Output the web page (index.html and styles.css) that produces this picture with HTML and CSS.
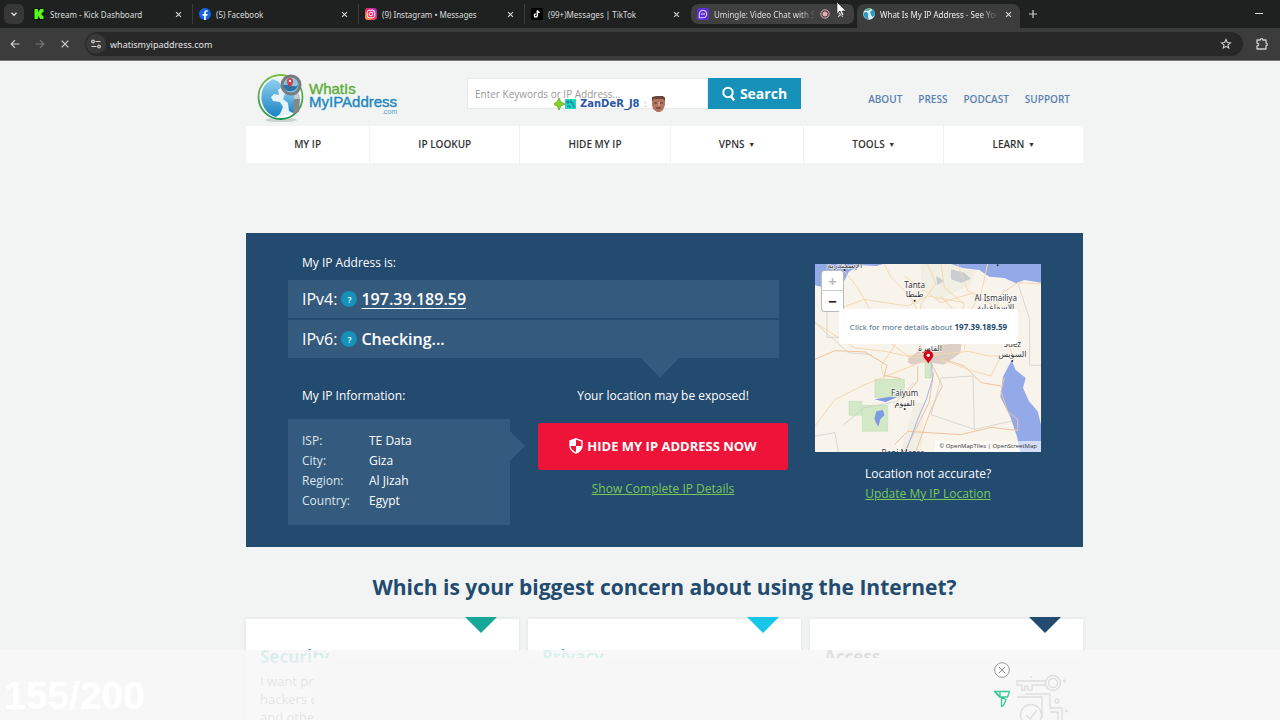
FILE: index.html
```html
<!DOCTYPE html>
<html lang="en">
<head>
    <meta charset="UTF-8">
    <meta name="viewport" content="width=device-width, initial-scale=1.0">
    <title>What Is My IP Address</title>
    <link rel="stylesheet" href="styles.css">
</head>
<body>
    <div class="browser">
        <div class="tab-strip">
            <button class="tab-search" aria-label="Search tabs">
                <svg width="8" height="8" viewBox="0 0 8 8"><path d="M1.5 2.8 4 5.2 6.5 2.8" fill="none" stroke="#ddd" stroke-width="1.4"/></svg>
            </button>
            <div class="tab">
                <svg class="favicon" viewBox="0 0 12 12"><rect width="12" height="12" fill="#0a1a06"/><path d="M1.5 1h3.4v2.5h1V2.3h1.2V1h3.4v3.2H9.3v1.2H8.2v1.2h1.1v1.2h1.2V11H7.1V9.7H5.9V8.5h-1V11H1.5z" fill="#53fc18"/></svg>
                <span class="tab-title">Stream - Kick Dashboard</span>
                <button class="tab-close" aria-label="Close"></button>
            </div>
            <div class="tab">
                <svg class="favicon" viewBox="0 0 12 12"><circle cx="6" cy="6" r="6" fill="#1463e8"/><path d="M5.1 12V7.8H3.6V6h1.5V4.8c0-1.7.9-2.6 2.4-2.6.5 0 .9.1 1.1.1v1.5h-.8c-.8 0-1 .5-1 1.1V6h1.8l-.3 1.8H6.8V12z" fill="#fff"/></svg>
                <span class="tab-title">(5) Facebook</span>
                <button class="tab-close" aria-label="Close"></button>
            </div>
            <div class="tab">
                <svg class="favicon" viewBox="0 0 12 12">
                    <defs><linearGradient id="insta" x1="0" y1="1" x2="1" y2="0"><stop offset="0" stop-color="#ffc13b"/><stop offset=".45" stop-color="#f5285d"/><stop offset="1" stop-color="#9b2ee0"/></linearGradient></defs>
                    <rect width="12" height="12" rx="3" fill="url(#insta)"/>
                    <rect x="2.2" y="2.2" width="7.6" height="7.6" rx="2.2" fill="none" stroke="#fff"/><circle cx="6" cy="6" r="1.8" fill="none" stroke="#fff"/><circle cx="8.2" cy="3.8" r=".5" fill="#fff"/>
                </svg>
                <span class="tab-title">(9) Instagram • Messages</span>
                <button class="tab-close" aria-label="Close"></button>
            </div>
            <div class="tab tab-quiet">
                <svg class="favicon" viewBox="0 0 12 12"><rect width="12" height="12" fill="#000"/><path d="M6.3 2.2v5.3a1.5 1.5 0 1 1-1.5-1.5M6.3 2.5c.3 1.3 1.1 1.8 2.4 1.9" fill="none" stroke="#fff" stroke-width="1.4"/></svg>
                <span class="tab-title">(99+)Messages | TikTok</span>
                <button class="tab-close" aria-label="Close"></button>
            </div>
            <div class="tab tab-hover tab-quiet">
                <svg class="favicon" viewBox="0 0 12 12"><rect width="12" height="12" rx="2" fill="#5b2fd6"/><path d="M2.3 9.7V6A3.7 3.7 0 1 1 6 9.7z" fill="none" stroke="#d9ccff" stroke-width="1.1"/><path d="M4.2 6h3.6" stroke="#d9ccff" stroke-width="1.3" stroke-dasharray="1 .3"/></svg>
                <span class="tab-title fade">Umingle: Video Chat with Strangers</span>
                <svg class="recording" viewBox="0 0 10 10"><circle cx="5" cy="5" r="4.2" fill="none" stroke="#e2aeb4"/><circle cx="5" cy="5" r="2.5" fill="#e2aeb4"/></svg>
                <button class="tab-close" aria-label="Close"></button>
            </div>
            <div class="tab tab-active tab-quiet">
                <svg class="favicon" viewBox="0 0 12 12"><circle cx="6" cy="6" r="5.8" fill="#dff1f6"/><path d="M.8 4.5 3.5 4l2 2-.6 2.5 1 3C2.5 11.500.2 8.500.8 4.500zM7 4l3-2.500C11.500 3 12 5 11.700 7L9.500 9 8 7z" fill="#2a9cc4"/><path d="M2 2.500A5.800 5.800 0 0 1 8 .6L5 3z" fill="#3fae8d"/></svg>
                <span class="tab-title fade">What Is My IP Address - See Your Public</span>
                <button class="tab-close" aria-label="Close"></button>
            </div>
            <button class="new-tab" aria-label="New tab">
                <svg width="8" height="8" viewBox="0 0 8 8"><path d="M4 0v8M0 4h8" stroke="#ccc" stroke-width="1.2"/></svg>
            </button>
            <button class="minimize" aria-label="Minimize"></button>
        </div>
        <div class="toolbar">
            <button class="tool" aria-label="Back"><svg viewBox="0 0 10 10"><path d="M9.5 5H1.500M5 1.200 1.200 5 5 8.800" fill="none" stroke="#d0d0d0" stroke-width="1.2"/></svg></button>
            <button class="tool" aria-label="Forward"><svg viewBox="0 0 10 10"><path d="M.5 5h8M5 1.200 8.800 5 5 8.800" fill="none" stroke="#777" stroke-width="1.2"/></svg></button>
            <button class="tool" aria-label="Stop"><svg viewBox="0 0 10 10"><path d="m1.7 1.7 6.6 6.6m0-6.600L1.700 8.300" stroke="#d0d0d0" stroke-width="1.2"/></svg></button>
            <div class="address-bar">
                <span class="site-info"><svg width="10" height="10" viewBox="0 0 10 10"><g fill="none" stroke="#d0d0d0" stroke-width="1.2"><circle cx="2" cy="2.5" r="1.3"/><path d="M4.5 2.500h5M.5 7.500h5"/><circle cx="8" cy="7.5" r="1.3"/></g></svg></span>
                <input class="url" type="text" value="whatismyipaddress.com" aria-label="Address">
                <svg class="star" width="12" height="12" viewBox="0 0 12 12"><path d="m6 1.5 1.3 3 3.200.3L8 6.900l.8 3.200L6 8.400l-2.800 1.700L4 6.900 1.500 4.800l3.200-.3z" fill="none" stroke="#d0d0d0" stroke-width="1.1"/></svg>
            </div>
            <button class="extensions" aria-label="Extensions"><svg width="14" height="14" viewBox="0 0 14 14"><path d="M2 3h3.300a1.300 1.300 0 0 1 2.600 0H11v3.100a1.300 1.300 0 0 1 0 2.600V12H2V9c2.200-.2 2.200-2.800 0-3z" fill="none" stroke="#d0d0d0" stroke-width="1.3" stroke-linejoin="round"/></svg></button>
        </div>
    </div>

    <div class="page">
        <header class="site-header">
            <a class="logo" href="#">
                <svg class="logo-globe" viewBox="0 0 50 50">
                    <defs>
                        <linearGradient id="sea" x1="0" y1="0" x2="0" y2="1"><stop offset="0" stop-color="#8ed1ed"/><stop offset="1" stop-color="#1b83c5"/></linearGradient>
                        <linearGradient id="ring" x1="0" y1="0" x2="0" y2="1"><stop offset="0" stop-color="#77c043"/><stop offset="1" stop-color="#23974a"/></linearGradient>
                    </defs>
                    <ellipse cx="24" cy="47" rx="16" ry="2" fill="#cbd0d0"/>
                    <circle cx="23.5" cy="24" r="22" fill="#fff" stroke="url(#ring)" stroke-width="1.8"/>
                    <circle cx="23.5" cy="24" r="19.5" fill="#e6f3f9"/>
                    <path d="M5 19c1-6 6-11 11-13l6 3 3 5-4 3 1 5-5-1-3 3 2 4 7 1 3 5-3 7-4 3C11 42 2 32 5 19z" fill="url(#sea)"/>
                    <path d="m28 20 6-3 8 4c2 8-1 15-6 19l-4-2-1-8-5-4z" fill="url(#sea)"/>
                    <path d="M37 26h6l-1 13-6 2z" fill="#85898c"/><path d="M37 21h5v5h-5z" fill="#c5c8ca"/>
                    <circle cx="34" cy="12" r="9" fill="#8bc4e2" stroke="#777b80" stroke-width="3"/>
                    <path d="M26 13c4-4 12 3 15-1-1 7-12 9-15 1z" fill="#2d72a6"/>
                    <path d="M33 14c-5-5-3-9 0-9s5 4 0 9z" fill="#d9383a"/><circle cx="33" cy="8" r="1.2" fill="#fff"/>
                </svg>
                <span class="logo-text">
                    <span class="logo-top">WhatIs</span>
                    <span class="logo-main">MyIPAddress</span>
                    <span class="logo-com">.com</span>
                </span>
            </a>
            <form class="search">
                <input type="text" placeholder="Enter Keywords or IP Address..." aria-label="Search">
                <button type="button">
                    <svg width="14" height="16" viewBox="0 0 14 16"><circle cx="6" cy="6.5" r="4.7" fill="none" stroke="#fff" stroke-width="2"/><path d="m8.8 10 3.400 4.500" stroke="#fff" stroke-width="2.4"/></svg>
                    Search
                </button>
                <div class="viewer-badge">
                    <svg width="22" height="12" viewBox="0 0 22 12"><path d="m5 0 2 4 4 2-4 2-2 4-2-4-4-2 4-2z" fill="#86cf24" stroke="#4f9414" stroke-width=".6"/><rect x="11" y="1" width="11" height="10" fill="#25d3c9"/><path d="M13 3h2v2h-2zM17 2v3h3M13 8h3v2M18 7h2v3" fill="none" stroke="#087c86"/></svg>
                    <span>ZanDeR_J8</span>
                    <i>:</i>
                    <svg width="15" height="16" viewBox="0 0 15 16"><path d="M1 1h13v8l-2 5-3 2H6l-4-3-1-4z" fill="#b47462"/><path d="M1 5V1l4-1h7l2 2v3l-2-2H3z" fill="#6b453a"/><path d="M3 7h3m3 0h3M5 12h5" stroke="#5a3028"/><path d="M7 6h2v4H7z" fill="#cf9a85"/></svg>
                </div>
            </form>
            <nav class="top-links">
                <a href="#">ABOUT</a>
                <a href="#">PRESS</a>
                <a href="#">PODCAST</a>
                <a href="#">SUPPORT</a>
            </nav>
        </header>

        <nav class="main-nav">
            <a href="#">MY IP</a>
            <a href="#">IP LOOKUP</a>
            <a href="#">HIDE MY IP</a>
            <a href="#">VPNS <small>▼</small></a>
            <a href="#">TOOLS <small>▼</small></a>
            <a href="#">LEARN <small>▼</small></a>
        </nav>

        <main>
            <section class="ip-panel">
                <div class="ip-left">
                    <p class="label">My IP Address is:</p>
                    <div class="addresses">
                        <div class="address">IPv4: <button class="help">?</button> <a href="#">197.39.189.59</a></div>
                        <div class="address">IPv6: <button class="help">?</button> <strong>Checking...</strong></div>
                    </div>
                    <div class="ip-bottom">
                        <div class="info">
                            <p class="label">My IP Information:</p>
                            <dl class="info-box">
                                <dt>ISP:</dt><dd>TE Data</dd>
                                <dt>City:</dt><dd>Giza</dd>
                                <dt>Region:</dt><dd>Al Jizah</dd>
                                <dt>Country:</dt><dd>Egypt</dd>
                            </dl>
                        </div>
                        <div class="exposed">
                            <p>Your location may be exposed!</p>
                            <button class="hide-button">
                                <svg width="14" height="16" viewBox="0 0 14 16"><path d="M7 .8 13 3v4.500c0 3.500-2.500 6-6 7.700-3.500-1.700-6-4.200-6-7.700V3z" fill="none" stroke="#fff" stroke-width="1.4"/><path d="M7 1v7H1V3zM7 8h6c-.5 3.200-2.500 5.400-6 7z" fill="#fff"/></svg>
                                HIDE MY IP ADDRESS NOW
                            </button>
                            <a class="green-link" href="#">Show Complete IP Details</a>
                        </div>
                    </div>
                </div>
                <div class="ip-right">
                    <div class="map">
                        <svg class="map-tiles" viewBox="22 24 678 564" preserveAspectRatio="xMidYMid slice">
                            <rect x="22" y="24" width="678" height="564" fill="#f8f4ec"/>
                            <path d="M340 24h170l-20 60-100 50-50-50zM320 440l30 0-10 148h-60z" fill="#f1eee4"/>
                            <g fill="#94a9e8">
                                <path d="M22 24h205l-20 6-50-2-34 20-20 40-40 10-41-10z"/>
                                <path d="M430 24h270v56l-50-8-25 10-35-16-45-4-30-20-50-6z"/>
                                <path d="m612 312 12 30 30 24-8 30 18 40 26 30 10 40v82h-62l-10-46-20-60-30-60 8-60z"/>
                            </g>
                            <path d="M430 40l40 10 20 18-30 12-30-10zM385 60l24 14-20 14z" fill="#c7cdd0"/>
                            <g fill="#a6d99a" fill-opacity=".45" stroke="#a5d3a0"><path d="M202 370h88v54h-88zM124 436h38v42h-38zM164 448h76v78h-76zM352 316h18v50h-18z"/></g>
                            <path d="m200 430 48-8 20 2-34 14zM206 466l20-4 4 16-12 12-6 22-6-10-6-14z" fill="#7d9be0"/>
                            <path d="m302 306 30-20 50 0 20-20 60-4-4 30-50 34-50-8-46 8-12-8z" fill="#dccfc5"/>
                            <g fill="none" stroke="#c9c8c5" stroke-width="2">
                                <path d="M58 24v220h120M22 200l100 90 70 6M108 506l60-50 100-20 50-56M22 540l60-10 10 58M400 366l96-6 4 160M400 366l-30 110 130 44 110-24M666 328V190L630 80M666 328h34"/>
                            </g>
                            <g fill="none" stroke="#f5d8b0" stroke-width="3">
                                <path d="M110 45l40 50 90 160 60 44 60-5M230 24l20 40 60 60 30 60v110M360 24l24 60-44 60-10 100M400 24l10 70 60 50-20 80-70 70M22 200l120 76 90 10 90 20 60-10 100-10 60 14 90-2M270 160l110 10 80-10 90 20M450 24l30 80 70 40 40 90 30 78M540 24l-20 90-50 80-90 90M700 84l-70-4-50 34-30 90M22 510l60-80 80-40 150-60 50-20M580 300l-30 60-70-20-80-30M230 370l-10-40 40-60 50-90M90 160l80-30 130 20 60-30 110 20M400 120l80 90-10 70M290 60l110 80 100-30"/>
                            </g>
                            <g fill="none" stroke="#f1c39e" stroke-width="3">
                                <path d="M330 330v44l-40 50M370 320l20 40 14 30-34 70-46 128M378 350l-14 90-74 148M22 310l60-26 90 4 66 40-8 30 50 10M590 366l-10 40 20 60 30 24v34l-80-10-90 22-160-10-40 40M410 310l60 20 50 50 60 10"/>
                            </g>
                            <path d="m372 320 2 50-18 60-22 50-40 108" fill="none" stroke="#9fb3e8" stroke-width="3"/>
                            <g class="map-label">
                                <text x="111" y="35">الإسكندرية</text>
                                <text x="321" y="95">Tanta</text><text x="321" y="124">طنطا</text>
                                <text x="564" y="134">Al Ismailiya</text><text x="564" y="162">الإسماعيلية</text>
                                <text x="367" y="284">القاهرة</text>
                                <text x="614" y="273">Suez</text><text x="614" y="304">السويس</text>
                                <text x="291" y="420">Faiyum</text><text x="291" y="449">الفيوم</text>
                                <text x="285" y="600">Bani Mazar</text>
                            </g>
                            <g fill="#333"><circle cx="111" cy="42" r="3"/><circle cx="321" cy="134" r="3"/><circle cx="291" cy="459" r="3"/><circle cx="614" cy="315" r="3"/><circle cx="570" cy="28" r="3"/></g>
                            <path d="M362 322c-5-10-14-14-14-24a14 14 0 0 1 28 0c0 10-9 14-14 24z" fill="#dc0017" stroke="#a4000f"/><circle cx="362" cy="298" r="5" fill="#fff"/>
                        </svg>
                        <div class="zoom"><button disabled>+</button><button>−</button></div>
                        <a class="popup" href="#">Click for more details about <b>197.39.189.59</b></a>
                        <div class="attribution">© OpenMapTiles | OpenStreetMap</div>
                    </div>
                    <p>Location not accurate?</p>
                    <a class="green-link" href="#">Update My IP Location</a>
                </div>
            </section>

            <h2>Which is your biggest concern about using the Internet?</h2>
            <section class="cards">
                <article class="card security">
                    <h3>Security</h3>
                    <p>I want pr<br>hackers c<br>and othe</p>
                </article>
                <article class="card privacy"><h3>Privacy</h3></article>
                <article class="card access"><h3>Access</h3></article>
            </section>
        </main>
    </div>

    <div class="ad-bar">
        <div class="counter">155/200</div>
        <div class="ad-controls">
            <button aria-label="Close ad"><svg width="18" height="18" viewBox="0 0 18 18"><circle cx="9" cy="9" r="7.3" fill="#fff" stroke="#999"/><path d="m6 6 6 6m0-6-6 6" stroke="#888"/></svg></button>
            <svg width="18" height="18" viewBox="0 0 18 18"><path d="M1.5 1.500h15l-2 5.500H6.500zM1.500 1.500l7 6v9l2-1 2.500-6-4.500-2.500M7 2v5" fill="none" stroke="#38c996" stroke-width="1.3" stroke-linejoin="round"/></svg>
        </div>
        <svg class="ad-art" width="60" height="56" viewBox="0 0 60 56">
            <g fill="none" stroke="#dedede" stroke-width="1.3">
                <circle cx="37" cy="19" r="7.5"/><circle cx="37" cy="19" r="4.5"/><path d="M30 17H1v4h5v5h3v-4h3v4h4v-5h14M1 33h25v22M9 30h25v14h12v12M34 48h8v8"/><circle cx="15" cy="51" r="10.5"/><path d="m10 51 4 4 7-9"/><circle cx="41" cy="37" r="2"/>
                <path d="M47 17h3m-1.500-1.500v3M49 47h3m-1.500-1.500v3M14 13h2"/>
            </g>
        </svg>
    </div>

    <svg class="cursor" width="12" height="16" viewBox="0 0 12 16"><path d="M1 1v12l3-3 2 5 2-1-2-4h4z" fill="#fff" stroke="#222" stroke-width=".6"/></svg>
</body>
</html>
```

FILE: styles.css
```css
* {
    box-sizing: border-box;
}

body {
    margin: 0;
    height: 100vh;
    overflow: hidden;
    background-color: #f1f4f3;
    font-family: 'Open Sans', 'Noto Sans', sans-serif;
    color: #333;
}

button, input {
    font-family: inherit;
    border: none;
    padding: 0;
    margin: 0;
    background: none;
}

button {
    cursor: pointer;
}

p, h2, h3, dl, dd {
    margin: 0;
}

svg {
    display: block;
    flex-shrink: 0;
}

/* browser chrome */
.browser {
    background-color: #1f2120;
}

.tab-strip {
    display: flex;
    align-items: flex-end;
    height: 28px;
    padding-left: 4px;
}

.tab-search {
    width: 20px;
    height: 20px;
    margin: 0 3px 4px 0;
    border-radius: 6px;
    background-color: #383838;
    display: flex;
    align-items: center;
    justify-content: center;
}

.tab {
    display: flex;
    align-items: center;
    flex: 0 1 166px;
    min-width: 0;
    height: 20px;
    margin-bottom: 4px;
    padding: 0 9px 0 6px;
    border-right: 1px solid #3c3c3c;
    color: #ddd;
    font-family: 'Noto Sans', sans-serif;
    font-size: 8px;
}

.tab-quiet {
    border-right-color: transparent;
}

.favicon {
    width: 12px;
    height: 12px;
    margin-right: 5px;
}

.tab-title {
    flex: 1;
    min-width: 0;
    white-space: nowrap;
    overflow: hidden;
}

.tab-title.fade {
    mask-image: linear-gradient(to right, #000 85%, transparent);
}

.tab-close {
    position: relative;
    width: 9px;
    height: 9px;
    margin-left: 6px;
}

.tab-close::before, .tab-close::after {
    content: "";
    position: absolute;
    top: 4px;
    left: 1px;
    width: 7px;
    height: 1px;
    background-color: #ddd;
    transform: rotate(45deg);
}

.tab-close::after {
    transform: rotate(-45deg);
}

.tab-hover {
    flex-basis: 164px;
    margin-right: 2px;
    background-color: #414041;
    background-clip: padding-box;
    border-radius: 7px;
}

.recording {
    width: 10px;
    height: 10px;
    margin-left: 4px;
}

.tab-active {
    flex-basis: 163px;
    height: 24px;
    margin: 0 3px 0 0;
    padding-right: 6px;
    padding-bottom: 4px;
    border-radius: 7px 7px 0 0;
    background-color: #3c3c3c;
    color: #eee;
}

.new-tab {
    margin: 0 0 10px 6px;
}

.minimize {
    width: 8px;
    height: 1px;
    margin: 0 17px 14px auto;
    background-color: #ddd;
}

.toolbar {
    display: flex;
    align-items: center;
    height: 33px;
    padding: 0 12px 0 10px;
    background-color: #3c3c3c;
    border-bottom: 1px solid #777;
}

.tool {
    width: 10px;
    height: 10px;
    margin-right: 15px;
}

.address-bar {
    flex: 1;
    display: flex;
    align-items: center;
    height: 24px;
    padding: 0 11px 0 1px;
    border-radius: 12px;
    background-color: #282828;
}

.site-info {
    display: flex;
    align-items: center;
    justify-content: center;
    width: 20px;
    height: 20px;
    border-radius: 50%;
    background-color: #3a3a3a;
}

.url {
    flex: 1;
    margin-left: 4px;
    color: #e3e3e3;
    font-size: 9px;
    font-family: 'Noto Sans', sans-serif;
}

.extensions {
    margin-left: 12px;
    margin-right: -1px;
}

/* site */
.page {
    padding-left: 49px;
}

.site-header, .main-nav, main {
    max-width: 837px;
    margin: 0 auto;
}

.site-header {
    display: flex;
    align-items: center;
    height: 65px;
    padding: 0 13px 0 11px;
}

.logo {
    display: flex;
    align-items: center;
    width: 210px;
    text-decoration: none;
}

.logo-globe {
    width: 50px;
    height: 50px;
    margin-top: 8px;
}

.logo-text {
    display: flex;
    flex-direction: column;
    margin: 10px 0 0 2px;
    font-family: 'Liberation Sans', Arial, sans-serif;
    font-size: 15px;
    line-height: 13px;
    -webkit-text-stroke: 0.4px currentColor;
}

.logo-top {
    color: #5fae3c;
}

.logo-main {
    color: #2388c2;
}

.logo-com {
    align-self: flex-end;
    color: #4a9fd0;
    font-size: 7px;
    line-height: 8px;
    -webkit-text-stroke: 0;
}

.search {
    position: relative;
    display: flex;
    width: 334px;
    height: 31px;
}

.search input {
    flex: 1;
    min-width: 0;
    padding: 0 7px;
    background-color: #fff;
    border: 1px solid #e8eaea;
    font-size: 10px;
}

.search input::placeholder {
    color: #999;
}

.search button {
    display: flex;
    align-items: center;
    justify-content: center;
    gap: 4px;
    width: 93px;
    background-color: #1691b9;
    color: #fff;
    font-size: 14px;
    font-weight: 700;
}

.viewer-badge {
    position: absolute;
    left: 87px;
    top: 18px;
    display: flex;
    align-items: center;
    gap: 4px;
    color: #2c56a8;
    font-family: 'DejaVu Sans', sans-serif;
    font-size: 10px;
    font-weight: 700;
    line-height: 16px;
}

.viewer-badge i {
    color: #aaa;
    font-style: normal;
    font-weight: 400;
}

.top-links {
    display: flex;
    gap: 16px;
    margin: 10px 0 0 auto;
}

.top-links a {
    color: #5c80b0;
    font-size: 10px;
    font-weight: 600;
    text-decoration: none;
}

.main-nav {
    display: flex;
    height: 37px;
    background-color: #fff;
}

.main-nav a {
    flex: 1 1 auto;
    color: #333;
    font-size: 10px;
    font-weight: 600;
    line-height: 37px;
    text-align: center;
    text-decoration: none;
    border-left: 1px solid #eef0f0;
}

.main-nav a:first-child {
    border-left: none;
}

.main-nav small {
    font-size: 7px;
    margin-left: 1px;
    vertical-align: 1px;
}

.ip-panel {
    display: flex;
    gap: 27px;
    min-height: 314px;
    margin-top: 70px;
    padding: 20px 42px;
    background-color: #234a6f;
    color: #fff;
    font-size: 12px;
}

.ip-left {
    flex: 1;
}

.label {
    padding-left: 14px;
    line-height: 20px;
}

.addresses {
    position: relative;
    display: flex;
    flex-direction: column;
    gap: 2px;
    margin: 7px 9px 0 0;
}

.addresses::after {
    content: "";
    position: absolute;
    top: 100%;
    right: 100px;
    border: solid transparent;
    border-width: 20px 19px 0;
    border-top-color: #345a7d;
}

.address {
    display: flex;
    align-items: center;
    gap: 4px;
    height: 38px;
    padding-left: 14px;
    background-color: #345a7d;
    font-size: 16px;
}

.address a, .address strong {
    color: #fff;
    font-weight: 600;
    text-underline-offset: 3px;
}

.help {
    width: 16px;
    height: 16px;
    border-radius: 50%;
    background-color: #1691b9;
    color: #fff;
    font-size: 9px;
    font-weight: 600;
}

.ip-bottom {
    display: flex;
    gap: 28px;
    margin-top: 28px;
}

.info {
    width: 222px;
}

.info-box {
    position: relative;
    display: grid;
    grid-template-columns: 67px 1fr;
    margin-top: 13px;
    padding: 12px 14px 14px;
    background-color: #345a7d;
    line-height: 20px;
}

.info-box::after {
    content: "";
    position: absolute;
    left: 100%;
    top: 12px;
    border: solid transparent;
    border-width: 15px 0 15px 15px;
    border-left-color: #345a7d;
}

.info-box dt {
    color: #dce5ed;
}

.info-box dd {
    font-weight: 500;
}

.exposed {
    flex: 1;
    text-align: center;
    line-height: 20px;
}

.hide-button {
    display: flex;
    align-items: center;
    justify-content: center;
    gap: 4px;
    width: 100%;
    height: 47px;
    margin: 17px 0 9px;
    padding-bottom: 2px;
    border-radius: 3px;
    background-color: #ee1338;
    color: #fff;
    font-size: 13px;
    font-weight: 700;
}

.green-link {
    color: #79c95a;
}

.ip-right {
    width: 226px;
    padding-top: 11px;
    line-height: 20px;
    text-align: center;
}

.map {
    position: relative;
    height: 188px;
    margin-bottom: 12px;
    overflow: hidden;
}

.map-tiles {
    width: 100%;
    height: 100%;
}

.map-label {
    fill: #333;
    font-family: 'Noto Sans', 'DejaVu Sans', sans-serif;
    font-size: 24px;
    text-anchor: middle;
    paint-order: stroke;
    stroke: #fff;
    stroke-width: 3px;
}

.zoom {
    position: absolute;
    left: 7px;
    top: 7px;
    display: flex;
    flex-direction: column;
    width: 21px;
    border-radius: 3px;
    background-color: #fff;
    box-shadow: 0 0 0 1px #bbb;
}

.zoom button {
    height: 20px;
    color: #222;
    font-size: 15px;
    font-weight: 700;
    line-height: 18px;
}

.zoom button:disabled {
    color: #bbb;
    border-bottom: 1px solid #ccc;
}

.popup {
    position: absolute;
    left: 24px;
    top: 45px;
    width: 179px;
    border-radius: 3px;
    background-color: #fff;
    color: #456482;
    font-size: 8px;
    line-height: 35px;
    text-decoration: none;
    white-space: nowrap;
}

.popup::after {
    content: "";
    position: absolute;
    left: 82px;
    top: 100%;
    border: solid transparent;
    border-width: 5px 7px 0;
    border-top-color: #fff;
}

.popup b {
    color: #234a6f;
}

.attribution {
    position: absolute;
    right: 0;
    bottom: 0;
    padding: 0 4px;
    background-color: rgba(255, 255, 255, 0.6);
    color: #333;
    font-size: 6px;
    line-height: 11px;
}

h2 {
    margin: 25px 0 17px;
    color: #234a6f;
    font-size: 21px;
    font-weight: 700;
    line-height: 30px;
    text-align: center;
}

.cards {
    display: flex;
    gap: 9px;
}

.card {
    position: relative;
    flex: 1;
    height: 180px;
    padding: 25px 14px;
    background-color: #fff;
    box-shadow: 0 0 4px rgba(0, 0, 0, 0.08);
    font-size: 13px;
    line-height: 18px;
}

.card::before {
    content: "";
    position: absolute;
    right: 22px;
    top: -2px;
    border: solid transparent;
    border-width: 16px 16px 0;
    border-top-color: #234a6f;
}

.card h3 {
    margin-bottom: 2px;
    font-size: 17px;
    line-height: 26px;
}

.security::before {
    border-top-color: #16a796;
}

.security h3 {
    color: #16a796;
}

.privacy::before {
    border-top-color: #17c7e8;
}

.privacy h3 {
    color: #17c7a8;
}

/* sticky ad over the page */
.ad-bar {
    position: fixed;
    left: 0;
    right: 0;
    bottom: 0;
    display: flex;
    height: 70px;
    background-image:
        linear-gradient(rgba(247, 247, 247, 0.88), rgba(247, 247, 247, 0.88)),
        linear-gradient(to right, rgba(247, 247, 247, 0.2) 314px, #f7f7f7 314px);
    background-size: 100% 100%, 100% 62px;
    background-position: bottom;
    background-repeat: no-repeat;
}

.counter {
    flex: 1;
    padding: 24px 0 0 4px;
    color: #fff;
    font-family: 'Liberation Sans', Arial, sans-serif;
    font-size: 39px;
    font-weight: 700;
    line-height: 44px;
}

.ad-controls {
    display: flex;
    flex-direction: column;
    gap: 11px;
    width: 23px;
    padding-top: 11px;
}

.ad-art {
    width: 60px;
    height: 56px;
    margin: 14px 204px 0 0;
}

.cursor {
    position: absolute;
    left: 836px;
    top: 1px;
}
```
